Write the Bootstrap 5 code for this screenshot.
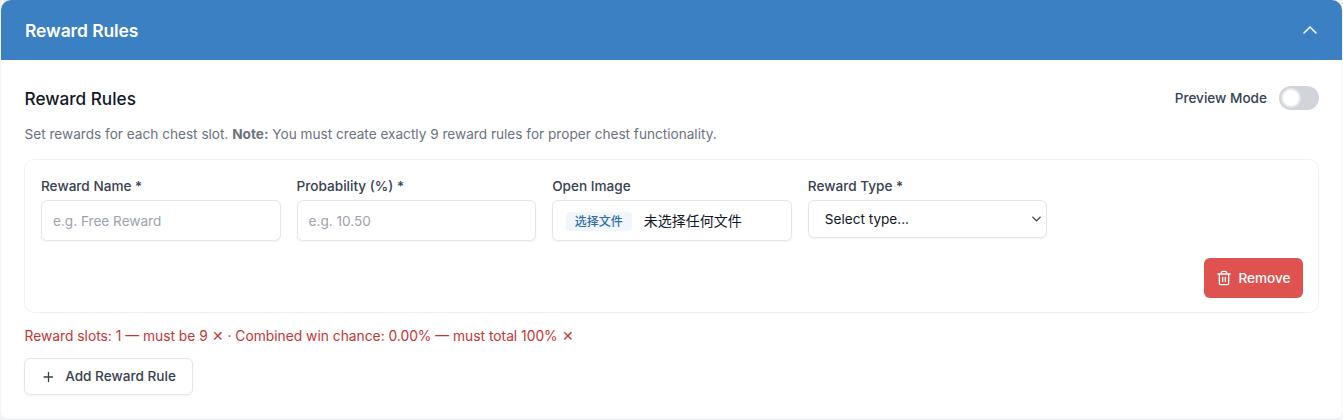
<!DOCTYPE html>
<html lang="en">
<head>
<meta charset="utf-8">
<title>Reward Rules</title>
<link href="https://cdn.jsdelivr.net/npm/bootstrap@5.3.0/dist/css/bootstrap.min.css" rel="stylesheet">
<style>
html,body{height:420px;overflow:hidden}
body{background:#f3f4f6;font-family:Inter,"Noto Sans CJK SC",sans-serif;color:#111827;padding:0 1px}
.rw-panel{border:0;border-radius:10px 10px 6px 6px;height:418px;overflow:hidden;background:#fff;box-shadow:none}
.rw-head{background:#3b80c3;color:#fff;height:60px;padding:2px 24px 0;border:0;border-radius:0;font-size:17.5px;font-weight:600;letter-spacing:-.1px}
.rw-body{padding:26px 23px 0}
.rw-title{font-size:17.2px;font-weight:500;margin:0;line-height:26px;color:#111827;padding-left:.5px}
.rw-preview{margin-top:-2px}
.rw-switch-label{font-size:13.6px;font-weight:500;color:#374151;margin:0}
.rw-toggle{margin:0;padding:0;min-height:0;line-height:0}
.rw-toggle .form-check-input{width:40px;height:24px;margin:0;float:none;background-color:#d1d5db;border:0;box-shadow:none;--bs-form-switch-bg:url("data:image/svg+xml,%3csvg xmlns='http://www.w3.org/2000/svg' viewBox='-4 -4 8 8'%3e%3ccircle r='3.3' fill='%23e5e7eb'/%3e%3ccircle r='2.7' fill='%23fff'/%3e%3c/svg%3e")}
.rw-desc{font-size:13.62px;color:#6b7280;margin:12px 0 15px;line-height:20px;padding-left:.5px}
.rw-desc strong{font-weight:700}
.rw-rule{border:1px solid #f0f1f3;border-radius:10px;padding:16px 15px 16px 16px;height:154px;margin-bottom:13px;box-shadow:0 1px 2px rgba(0,0,0,.01)}
.rw-label{display:block;font-size:13.6px;font-weight:500;color:#374151;margin:0 0 4px;line-height:20px}
.rw-input,.rw-input:focus{height:41px;border:1px solid #e5e7eb;border-radius:6px;font-size:13.6px;padding:0 11px;color:#111827;box-shadow:0 1px 2px rgba(0,0,0,.05)}
.rw-input::placeholder{color:#9ca3af}
.rw-file{display:flex;align-items:center;height:41px;border:1px solid #e5e7eb;border-radius:6px;padding:0 12.5px;font-size:14px;color:#111827;box-shadow:0 1px 2px rgba(0,0,0,.05)}
.rw-file-btn{background:#f0f6fb;color:#2f6da8;font-size:12px;border-radius:4px;padding:0 9px;height:19px;line-height:19px;margin:1px 12px 0 0;font-weight:500}
.rw-select,.rw-select:focus{height:38px;border:1px solid #e5e7eb;border-radius:6px;font-size:13.6px;padding:0 28px 0 16px;color:#111827;box-shadow:0 1px 2px rgba(0,0,0,.05);background-position:right 3px center;background-size:13px 10px}
.rw-actions{margin-top:17px}
.rw-remove,.rw-remove:hover{background:#e0524f;border:0;color:#fff;width:99px;height:40px;border-radius:6px;font-size:13.6px;font-weight:500;padding:0;gap:6px}
.rw-error{color:#c53535;font-size:13.8px;line-height:20px;margin:0 0 12px;padding-left:.5px}
.rw-add,.rw-add:hover{background:#fff;border:1px solid #e5e7eb;color:#374151;width:169px;height:37px;border-radius:6px;font-size:13.6px;font-weight:500;padding:0;box-shadow:0 1px 2px rgba(0,0,0,.05)}
</style>
</head>
<body>
<div class="card rw-panel">
  <div class="card-header rw-head d-flex align-items-center justify-content-between">
    <span>Reward Rules</span>
    <svg width="16" height="16" viewBox="0 0 16 16" fill="none" stroke="#fff" stroke-width="1.5" stroke-linecap="round" stroke-linejoin="round"><path d="M2 10 8 4 14 10"/></svg>
  </div>
  <div class="card-body rw-body">
    <div class="d-flex align-items-center justify-content-between">
      <h5 class="rw-title">Reward Rules</h5>
      <div class="d-flex align-items-center gap-2 rw-preview">
        <label class="rw-switch-label me-1" for="preview">Preview Mode</label>
        <div class="form-check form-switch rw-toggle"><input class="form-check-input" type="checkbox" role="switch" id="preview"></div>
      </div>
    </div>
    <p class="rw-desc">Set rewards for each chest slot. <strong>Note:</strong> You must create exactly 9 reward rules for proper chest functionality.</p>
    <div class="rw-rule">
      <div class="row row-cols-5 g-3">
        <div class="col">
          <label class="rw-label">Reward Name *</label>
          <input type="text" class="form-control rw-input" placeholder="e.g. Free Reward">
        </div>
        <div class="col">
          <label class="rw-label">Probability (%) *</label>
          <input type="text" class="form-control rw-input" placeholder="e.g. 10.50">
        </div>
        <div class="col">
          <label class="rw-label">Open Image</label>
          <div class="rw-file"><span class="rw-file-btn">选择文件</span><span>未选择任何文件</span></div>
        </div>
        <div class="col">
          <label class="rw-label">Reward Type *</label>
          <select class="form-select rw-select"><option>Select type...</option></select>
        </div>
      </div>
      <div class="d-flex justify-content-end rw-actions">
        <button type="button" class="btn rw-remove d-inline-flex align-items-center justify-content-center">
          <svg width="16" height="16" viewBox="0 0 24 24" fill="none" stroke="#fff" stroke-width="2" stroke-linecap="round" stroke-linejoin="round"><path d="M3 6h18M19 6v14a2 2 0 0 1-2 2H7a2 2 0 0 1-2-2V6M8 6V4a2 2 0 0 1 2-2h4a2 2 0 0 1 2 2v2M10 11v6M14 11v6"/></svg>
          Remove
        </button>
      </div>
    </div>
    <p class="rw-error">Reward slots: 1 — must be 9 ✕ · Combined win chance: 0.00% — must total 100% ✕</p>
    <button type="button" class="btn rw-add d-inline-flex align-items-center justify-content-center gap-2">
      <svg width="12" height="12" viewBox="-1.5 0 12 12" fill="none" stroke="#374151" stroke-width="1.3" stroke-linecap="round"><path d="M6 1.5v9M1.5 6h9"/></svg>
      <span class="ms-1">Add Reward Rule</span>
    </button>
  </div>
</div>
<script src="https://cdn.jsdelivr.net/npm/bootstrap@5.3.0/dist/js/bootstrap.bundle.min.js"></script>
</body>
</html>
